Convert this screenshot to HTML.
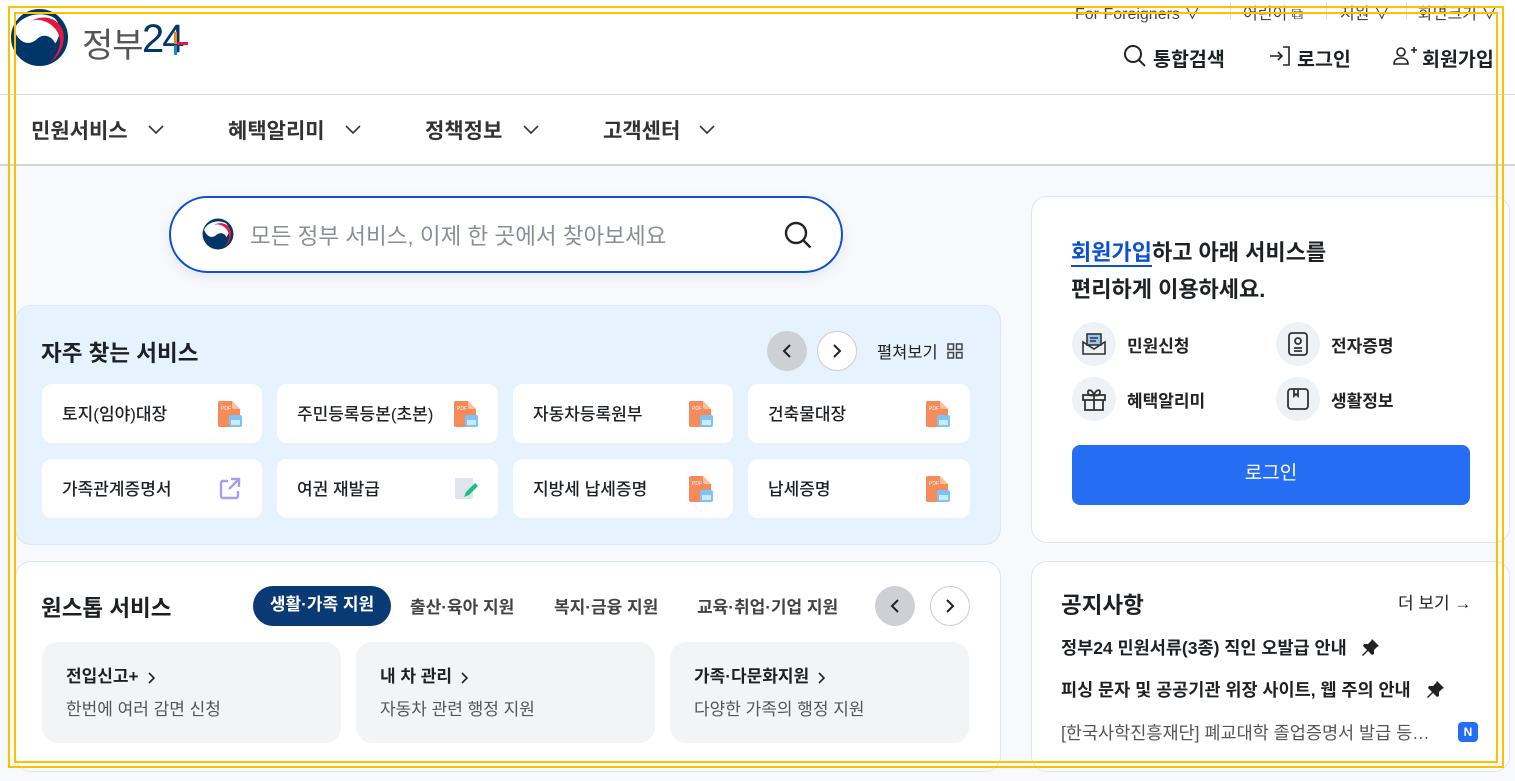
<!DOCTYPE html>
<html lang="ko"><head><meta charset="utf-8">
<style>
*{margin:0;padding:0;box-sizing:border-box}
body{width:1515px;height:781px;overflow:hidden;background:#f8f9fc;font-family:"Liberation Sans","Noto Sans CJK KR",sans-serif;color:#1e2124;position:relative}
.a{position:absolute;white-space:nowrap}
.b{font-weight:700}
.card{position:absolute;background:#fff;border-radius:10px}
.card span{position:absolute;left:20px;top:16px;font-size:17px;font-weight:500;color:#1e2124}
.pdf{position:absolute;right:20px;top:17px;width:24px;height:26px}
.circ{position:absolute;width:40px;height:40px;border-radius:50%;display:flex;align-items:center;justify-content:center}
.sub{position:absolute;background:#f3f4f6;border-radius:16px;top:642px;height:101px;width:299px}
.sub .t{position:absolute;left:24px;top:20px;font-size:17px;font-weight:700}
.sub .d{position:absolute;left:24px;top:53px;font-size:17px;color:#555}
.sub svg{vertical-align:middle;margin-left:8px}
.ic{position:absolute;width:44px;height:44px;border-radius:50%;background:#eef1f5;display:flex;align-items:center;justify-content:center}
.il{position:absolute;font-size:17px;font-weight:700;color:#222}
.y{position:absolute;border:2.5px solid #ffc000;pointer-events:none}
</style></head><body>
<svg width="0" height="0" style="position:absolute"><defs>
<symbol id="emb" viewBox="0 0 60 60">
<circle cx="30" cy="30" r="29" fill="#003668"/>
<path d="M4 22 C10 8 30 2 45 10 C52 16 52 28 46 36 C42 28 34 26 28 31 C21 38 10 38 4 22Z" fill="#fff"/>
<path d="M22 13 C34 6 50 10 54 24 C57 36 50 50 40 56 C50 46 54 34 48 24 C42 14 30 10 22 13Z" fill="#e4173f"/>
</symbol>
<symbol id="pdf" viewBox="0 0 24 26"><path d="M2 0h12l8 8v16a2 2 0 0 1-2 2H2a2 2 0 0 1-2-2V2a2 2 0 0 1 2-2z" fill="#f58a5a"/><path d="M14 0l8 8h-6a2 2 0 0 1-2-2z" fill="#fbc0a0"/><text x="3" y="9" font-size="5" fill="#fff" font-family="Liberation Sans">PDF</text><rect x="11" y="14" width="13" height="12" rx="2" fill="#7cc4f5"/><rect x="13" y="19" width="9" height="5" fill="#cdeafc"/></symbol>
<symbol id="pin" viewBox="0 0 20 20"><path d="M12 1l7 7-2 1-3 3 0 4-2 1-4-4-5 5-1-1 5-5-4-4 1-2h4l3-3z" fill="#222"/></symbol>
</defs></svg>
<!-- header -->
<div class="a" style="left:0;top:0;width:1515px;height:165px;background:#fff"></div>
<svg class="a" style="left:10px;top:8px" width="59" height="59"><use href="#emb"/></svg>
<div class="a" style="left:82px;top:18px;font-size:34px;color:#555;letter-spacing:-1px">정부</div>
<div class="a" style="left:142px;top:17px;font-size:40px;color:#003668;letter-spacing:-2px">24</div>
<div class="a" style="left:174px;top:32px;width:3px;height:12px;background:#f58220"></div>
<div class="a" style="left:177px;top:42px;width:11px;height:3px;background:#e4173f"></div>
<div class="a" style="left:174px;top:45px;width:3px;height:10px;background:#0b91d7"></div>

<div class="a" style="left:1075px;top:0px;font-size:16px;color:#444">For Foreigners ∨</div>
<div class="a" style="left:1230px;top:2px;width:1px;height:18px;background:#ddd"></div>
<div class="a" style="left:1243px;top:0px;font-size:16px;color:#444">어린이 ⧉</div>
<div class="a" style="left:1326px;top:2px;width:1px;height:18px;background:#ddd"></div>
<div class="a" style="left:1340px;top:0px;font-size:16px;color:#444">지원 ∨</div>
<div class="a" style="left:1406px;top:2px;width:1px;height:18px;background:#ddd"></div>
<div class="a" style="left:1418px;top:0px;font-size:16px;color:#444">화면크기 ∨</div>

<svg class="a" style="left:1123px;top:44px" width="24" height="24" viewBox="0 0 24 24" fill="none" stroke="#222" stroke-width="2"><circle cx="10" cy="10" r="8"/><path d="M16 16l6 6"/></svg>
<div class="a b" style="left:1153px;top:43px;font-size:19.5px">통합검색</div>
<svg class="a" style="left:1268px;top:45px" width="24" height="22" viewBox="0 0 24 22" fill="none" stroke="#222" stroke-width="1.6"><path d="M15 2h6v18h-6M2 11h12M10 7l4 4-4 4"/></svg>
<div class="a b" style="left:1297px;top:43px;font-size:19.5px">로그인</div>
<svg class="a" style="left:1392px;top:45px" width="26" height="22" viewBox="0 0 26 22" fill="none" stroke="#222" stroke-width="1.6"><circle cx="9" cy="7" r="4"/><path d="M2 19c0-4 3-6 7-6s7 2 7 6zM19 5h6M22 2v6"/></svg>
<div class="a b" style="left:1422px;top:43px;font-size:19.5px">회원가입</div>

<div class="a" style="left:0;top:94px;width:1515px;height:1px;background:#dcdcdc"></div>
<div class="a b" style="left:31px;top:115px;font-size:21px;color:#333">민원서비스</div>
<div class="a b" style="left:228px;top:115px;font-size:21px;color:#333">혜택알리미</div>
<div class="a b" style="left:425px;top:115px;font-size:21px;color:#333">정책정보</div>
<div class="a b" style="left:603px;top:115px;font-size:21px;color:#333">고객센터</div>
<svg class="a" style="left:147px;top:124px" width="18" height="12"><path d="M2 2l7 7 7-7" fill="none" stroke="#333" stroke-width="1.6"/></svg>
<svg class="a" style="left:344px;top:124px" width="18" height="12"><path d="M2 2l7 7 7-7" fill="none" stroke="#333" stroke-width="1.6"/></svg>
<svg class="a" style="left:522px;top:124px" width="18" height="12"><path d="M2 2l7 7 7-7" fill="none" stroke="#333" stroke-width="1.6"/></svg>
<svg class="a" style="left:698px;top:124px" width="18" height="12"><path d="M2 2l7 7 7-7" fill="none" stroke="#333" stroke-width="1.6"/></svg>
<div class="a" style="left:0;top:164px;width:1515px;height:2px;background:#d3d5d9"></div>

<!-- search -->
<div class="a" style="left:169px;top:196px;width:674px;height:77px;border:2px solid #0b50d0;border-radius:39px;background:#fff;box-shadow:0 4px 12px rgba(40,80,160,.1)"></div>
<svg class="a" style="left:202px;top:218px" width="32" height="32"><use href="#emb"/></svg>
<div class="a" style="left:250px;top:219px;font-size:22.5px;color:#8a8f96">모든 정부 서비스, 이제 한 곳에서 찾아보세요</div>
<svg class="a" style="left:783px;top:220px" width="30" height="30" viewBox="0 0 30 30" fill="none" stroke="#222" stroke-width="2.4"><circle cx="13" cy="13" r="10"/><path d="M20.5 20.5l7 7"/></svg>

<!-- frequent -->
<div class="a" style="left:15px;top:305px;width:986px;height:240px;background:#e6f2fd;border-radius:16px;border:1px solid #dbe8f7"></div>
<div class="a b" style="left:41px;top:336px;font-size:22.5px">자주 찾는 서비스</div>
<div class="circ" style="left:767px;top:331px;background:#cdd0d5"><svg width="12" height="16"><path d="M9 2L3 8l6 6" fill="none" stroke="#222" stroke-width="2"/></svg></div>
<div class="circ" style="left:817px;top:331px;background:#fff;border:1px solid #ccc"><svg width="12" height="16"><path d="M3 2l6 6-6 6" fill="none" stroke="#222" stroke-width="2"/></svg></div>
<div class="a" style="left:877px;top:339px;font-size:16.5px;color:#222">펼쳐보기</div>
<svg class="a" style="left:947px;top:343px" width="16" height="16" viewBox="0 0 16 16" fill="none" stroke="#444" stroke-width="1.5"><rect x="1" y="1" width="5.5" height="5.5"/><rect x="9.5" y="1" width="5.5" height="5.5"/><rect x="1" y="9.5" width="5.5" height="5.5"/><rect x="9.5" y="9.5" width="5.5" height="5.5"/></svg>

<div class="card" style="left:42px;top:384px;width:220px;height:59px"><span>토지(임야)대장</span><svg class="pdf"><use href="#pdf"/></svg></div>
<div class="card" style="left:277px;top:384px;width:221px;height:59px"><span>주민등록등본(초본)</span><svg class="pdf"><use href="#pdf"/></svg></div>
<div class="card" style="left:513px;top:384px;width:220px;height:59px"><span>자동차등록원부</span><svg class="pdf"><use href="#pdf"/></svg></div>
<div class="card" style="left:748px;top:384px;width:222px;height:59px"><span>건축물대장</span><svg class="pdf"><use href="#pdf"/></svg></div>
<div class="card" style="left:42px;top:459px;width:220px;height:59px"><span>가족관계증명서</span><svg class="pdf" viewBox="0 0 24 26"><path d="M10 5H5a2 2 0 0 0-2 2v13a2 2 0 0 0 2 2h13a2 2 0 0 0 2-2v-5M13 3h8v8M21 3l-10 10" fill="none" stroke="#a99cf5" stroke-width="2.4"/></svg></div>
<div class="card" style="left:277px;top:459px;width:221px;height:59px"><span>여권 재발급</span><svg class="pdf" viewBox="0 0 24 26"><rect x="1" y="2" width="18" height="21" rx="2" fill="#dfe4ee"/><path d="M10 21l2-5 9-9 3 3-9 9z" fill="#1fbf84"/></svg></div>
<div class="card" style="left:513px;top:459px;width:220px;height:59px"><span>지방세 납세증명</span><svg class="pdf"><use href="#pdf"/></svg></div>
<div class="card" style="left:748px;top:459px;width:222px;height:59px"><span>납세증명</span><svg class="pdf"><use href="#pdf"/></svg></div>

<!-- onestop -->
<div class="a" style="left:15px;top:561px;width:986px;height:211px;background:#fff;border-radius:16px;border:1px solid #dbe6f6"></div>
<div class="a b" style="left:41px;top:591px;font-size:22.5px">원스톱 서비스</div>
<div class="a b" style="left:253px;top:586px;width:138px;height:40px;border-radius:20px;background:#0a3a73;color:#fff;font-size:17px;line-height:38px;text-align:center">생활·가족 지원</div>
<div class="a b" style="left:410px;top:593px;font-size:17px;color:#444">출산·육아 지원</div>
<div class="a b" style="left:554px;top:593px;font-size:17px;color:#444">복지·금융 지원</div>
<div class="a b" style="left:697px;top:593px;font-size:17px;color:#444">교육·취업·기업 지원</div>
<div class="circ" style="left:875px;top:586px;background:#cdd0d5"><svg width="12" height="16"><path d="M9 2L3 8l6 6" fill="none" stroke="#222" stroke-width="2"/></svg></div>
<div class="circ" style="left:930px;top:586px;background:#fff;border:1px solid #ccc"><svg width="12" height="16"><path d="M3 2l6 6-6 6" fill="none" stroke="#222" stroke-width="2"/></svg></div>
<div class="sub" style="left:42px"><div class="t">전입신고+<svg width="10" height="14"><path d="M2 2l5 5-5 5" fill="none" stroke="#222" stroke-width="1.6"/></svg></div><div class="d">한번에 여러 감면 신청</div></div>
<div class="sub" style="left:356px"><div class="t">내 차 관리<svg width="10" height="14"><path d="M2 2l5 5-5 5" fill="none" stroke="#222" stroke-width="1.6"/></svg></div><div class="d">자동차 관련 행정 지원</div></div>
<div class="sub" style="left:670px"><div class="t">가족·다문화지원<svg width="10" height="14"><path d="M2 2l5 5-5 5" fill="none" stroke="#222" stroke-width="1.6"/></svg></div><div class="d">다양한 가족의 행정 지원</div></div>

<!-- right card -->
<div class="a" style="left:1031px;top:196px;width:479px;height:347px;background:#fff;border-radius:16px;border:1px solid #dfe6f2"></div>
<div class="a b" style="left:1071px;top:234px;font-size:22px;line-height:37px">
<span style="color:#0b50d0;border-bottom:2px solid #0b50d0">회원가입</span>하고 아래 서비스를<br>편리하게 이용하세요.</div>
<div class="ic" style="left:1072px;top:322px"><svg width="26" height="24" viewBox="0 0 26 24" fill="none" stroke="#333" stroke-width="1.6"><path d="M2 10v12h22V10L13 17z"/><rect x="6" y="2" width="14" height="11" fill="#9cc3f0" stroke="#333"/><path d="M9 6h8M9 9h6"/></svg></div>
<div class="il" style="left:1127px;top:332px">민원신청</div>
<div class="ic" style="left:1276px;top:322px"><svg width="22" height="26" viewBox="0 0 22 26" fill="none" stroke="#333" stroke-width="1.8"><rect x="2" y="2" width="18" height="22" rx="3"/><circle cx="11" cy="10" r="3"/><path d="M7 17h8M7 20h8"/></svg></div>
<div class="il" style="left:1331px;top:332px">전자증명</div>
<div class="ic" style="left:1072px;top:377px"><svg width="26" height="26" viewBox="0 0 26 26" fill="none" stroke="#333" stroke-width="1.8"><rect x="2" y="9" width="22" height="5"/><path d="M4 14v10h18V14M13 9v15M13 9c-2-6-7-6-6-2s6 2 6 2c2-6 7-6 6-2s-6 2-6 2"/></svg></div>
<div class="il" style="left:1127px;top:387px">혜택알리미</div>
<div class="ic" style="left:1276px;top:377px"><svg width="24" height="24" viewBox="0 0 24 24" fill="none" stroke="#333" stroke-width="1.8"><rect x="2" y="2" width="20" height="20" rx="3"/><path d="M8 2v7l2-2 2 2V2"/></svg></div>
<div class="il" style="left:1331px;top:387px">생활정보</div>
<div class="a" style="left:1072px;top:445px;width:398px;height:60px;background:#256ef4;border-radius:8px;color:#fff;font-size:19px;line-height:58px;text-align:center">로그인</div>

<!-- notice -->
<div class="a" style="left:1031px;top:561px;width:479px;height:211px;background:#fff;border-radius:16px;border:1px solid #dfe6f2"></div>
<div class="a b" style="left:1061px;top:588px;font-size:22.5px">공지사항</div>
<div class="a" style="left:1398px;top:589px;font-size:17px;color:#222">더 보기 →</div>
<div class="a b" style="left:1061px;top:635px;font-size:17.5px">정부24 민원서류(3종) 직인 오발급 안내</div>
<svg class="a" style="left:1360px;top:638px" width="20" height="20"><use href="#pin"/></svg>
<div class="a b" style="left:1061px;top:677px;font-size:17.5px">피싱 문자 및 공공기관 위장 사이트, 웹 주의 안내</div>
<svg class="a" style="left:1425px;top:680px" width="20" height="20"><use href="#pin"/></svg>
<div class="a" style="left:1061px;top:720px;font-size:17.5px;color:#555">[한국사학진흥재단] 폐교대학 졸업증명서 발급 등…</div>
<div class="a b" style="left:1458px;top:722px;width:20px;height:20px;border-radius:4px;background:#256ef4;color:#fff;font-size:12px;line-height:20px;text-align:center">N</div>

<!-- yellow overlay -->
<div class="y" style="left:8px;top:6px;width:1496px;height:762px"></div>
<div class="y" style="left:14px;top:12px;width:1484px;height:751px"></div>
</body></html>
